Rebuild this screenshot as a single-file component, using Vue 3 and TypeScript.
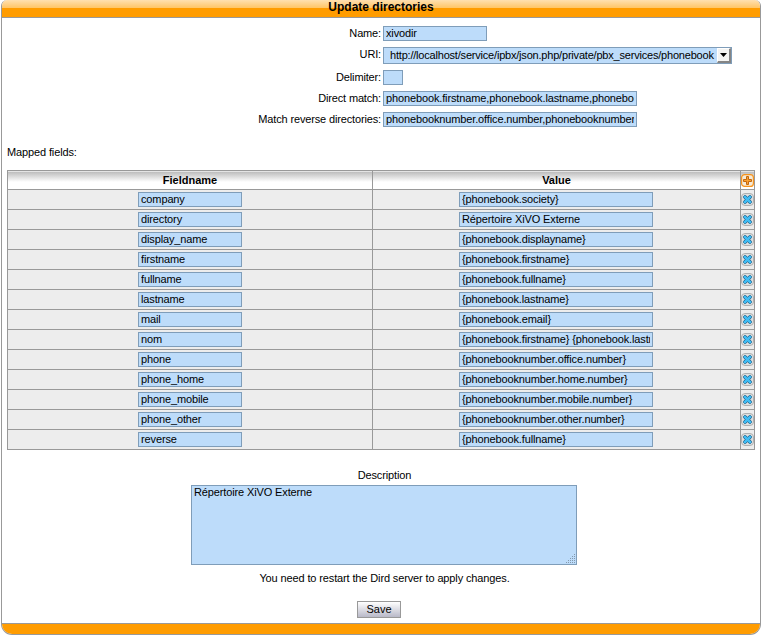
<script setup lang="ts">
import { ref } from 'vue'

interface MappedField {
  name: string
  value: string
}

const name = ref('xivodir')
const uri = ref('http://localhost/service/ipbx/json.php/private/pbx_services/phonebook')
const delimiter = ref('')
const directMatch = ref('phonebook.firstname,phonebook.lastname,phonebook.displayname')
const reverseMatch = ref('phonebooknumber.office.number,phonebooknumber.mobile.number')
const description = ref('Répertoire XiVO Externe')

const fields = ref<MappedField[]>([
  { name: 'company', value: '{phonebook.society}' },
  { name: 'directory', value: 'Répertoire XiVO Externe' },
  { name: 'display_name', value: '{phonebook.displayname}' },
  { name: 'firstname', value: '{phonebook.firstname}' },
  { name: 'fullname', value: '{phonebook.fullname}' },
  { name: 'lastname', value: '{phonebook.lastname}' },
  { name: 'mail', value: '{phonebook.email}' },
  { name: 'nom', value: '{phonebook.firstname} {phonebook.lastname}' },
  { name: 'phone', value: '{phonebooknumber.office.number}' },
  { name: 'phone_home', value: '{phonebooknumber.home.number}' },
  { name: 'phone_mobile', value: '{phonebooknumber.mobile.number}' },
  { name: 'phone_other', value: '{phonebooknumber.other.number}' },
  { name: 'reverse', value: '{phonebook.fullname}' },
])

function addField() {
  fields.value.push({ name: '', value: '' })
}

function removeField(index: number) {
  fields.value.splice(index, 1)
}
</script>

<template>
  <form class="panel" @submit.prevent>
    <h3 class="title">Update directories</h3>
    <div class="body">
      <div class="row"><label>Name:</label><input v-model="name" class="short" spellcheck="false" /></div>
      <div class="row uri">
        <label>URI:</label>
        <div class="select">
          <span>{{ uri }}</span>
          <i class="arrow"><svg width="7" height="4" viewBox="0 0 7 4"><path d="M0 0H7L3.5 4Z" fill="#000" /></svg></i>
        </div>
      </div>
      <div class="row"><label>Delimiter:</label><input v-model="delimiter" class="tiny" /></div>
      <div class="row"><label>Direct match:</label><input v-model="directMatch" class="long" spellcheck="false" /></div>
      <div class="row"><label>Match reverse directories:</label><input v-model="reverseMatch" class="long" spellcheck="false" /></div>

      <p class="mapped">Mapped fields:</p>
      <div class="table">
        <div class="line head">
          <div class="cell">Fieldname</div>
          <div class="cell">Value</div>
          <div class="cell icon" @click="addField">
            <svg width="13" height="13" viewBox="0 0 13 13">
              <rect x=".6" y=".6" width="11.8" height="11.8" rx="3" fill="#f5ead8" stroke="#f7941d" stroke-width="1.2" />
              <path d="M5.5 2.5H7.5V5.5H10.5V7.5H7.5V10.5H5.5V7.5H2.5V5.5H5.5Z" fill="#f9a030" stroke="#c4660c" />
            </svg>
          </div>
        </div>
        <div v-for="(field, i) in fields" :key="i" class="line">
          <div class="cell"><input v-model="field.name" class="short" spellcheck="false" /></div>
          <div class="cell val"><input v-model="field.value" class="value" spellcheck="false" /></div>
          <div class="cell icon" @click="removeField(i)">
            <svg width="13" height="13" viewBox="0 0 13 13">
              <rect x=".5" y=".5" width="12" height="12" rx="3.5" fill="#dedede" stroke="#b0b0b0" />
              <path d="M3.5 2.5H4.5L6.5 4.2L8.5 2.5H9.5L10.5 3.5V4.5L8.8 6.5L10.5 8.5V9.5L9.5 10.5H8.5L6.5 8.8L4.5 10.5H3.5L2.5 9.5V8.5L4.2 6.5L2.5 4.5V3.5Z" fill="#40bdf4" stroke="#266f98" />
            </svg>
          </div>
        </div>
      </div>

      <p class="desc">Description</p>
      <div class="area">
        <textarea v-model="description" spellcheck="false"></textarea>
        <svg class="grip" width="10" height="10" viewBox="0 0 10 10" shape-rendering="crispEdges">
          <path d="M8 0h1v1h-1zM6 2h1v1h-1zM8 2h1v1h-1zM4 4h1v1h-1zM6 4h1v1h-1zM8 4h1v1h-1zM2 6h1v1h-1zM4 6h1v1h-1zM6 6h1v1h-1zM8 6h1v1h-1zM0 8h1v1h-1zM2 8h1v1h-1zM4 8h1v1h-1zM6 8h1v1h-1zM8 8h1v1h-1z" fill="#8499ad" />
        </svg>
      </div>
      <p class="notice">You need to restart the Dird server to apply changes.</p>
      <button class="save" type="submit">Save</button>
    </div>
    <div class="foot"></div>
  </form>
</template>

<style>
body {
  margin: 0;
  background: #fff;
  overflow: hidden;
}
</style>

<style scoped>
* {
  box-sizing: border-box;
}
.panel {
  width: 760px;
  height: 635px;
  margin-left: 1px;
  border: 1px solid #999;
  border-top: 0;
  border-radius: 6px 6px 11px 11px;
  overflow: hidden;
  display: flex;
  flex-direction: column;
  font: 11px/13px "Liberation Sans", Arial, sans-serif;
  color: #000;
}
.title {
  height: 18px;
  margin: 0;
  flex: none;
  border-bottom: 1px solid #999;
  background: linear-gradient(#ffe0b0, #ffc566 8px, #ff9c00 8px);
  font-size: 12px;
  line-height: 14px;
  text-align: center;
}
.body {
  flex: 1;
  padding: 8px 5px 0;
  display: flex;
  flex-direction: column;
}
.row {
  display: grid;
  grid-template-columns: 374px auto;
  column-gap: 2px;
  justify-content: start;
  height: 15px;
  margin-bottom: 6px;
}
.row label {
  text-align: right;
  line-height: 15px;
  letter-spacing: -0.15px;
}
.row.uri {
  height: 17px;
}
input,
textarea,
.select {
  margin: 0;
  border: 1px solid #7f9db9;
  border-radius: 0;
  background: #bddcfa;
  font: inherit;
  letter-spacing: -0.13px;
  color: #000;
  outline: 0;
}
input {
  display: block;
  height: 15px;
  padding: 0 2px 1px;
  line-height: 12px;
}
.short {
  width: 104px;
}
.tiny {
  width: 20px;
}
.long {
  width: 254px;
}
.value {
  width: 194px;
}
.select {
  width: 349px;
  height: 17px;
  display: flex;
  justify-content: space-between;
  padding-left: 6px;
  line-height: 15px;
  letter-spacing: -0.2px;
  white-space: nowrap;
}
.arrow {
  flex: none;
  width: 14px;
  height: 15px;
  display: flex;
  align-items: center;
  justify-content: center;
  background: #f4f4f2;
  border: 1px solid;
  border-width: 1px 2px 2px 1px;
  border-color: #fff #858585 #858585 #fff;
}
p {
  margin: 0;
  letter-spacing: -0.13px;
}
.mapped {
  margin-top: 13px;
  height: 24px;
}
.table {
  width: 748px;
  border: 1px solid #999;
  border-bottom: 0;
}
.line {
  display: grid;
  grid-template-columns: 365px 368px 13px;
  height: 20px;
  border-bottom: 1px solid #999;
  background: #ededed;
}
.head {
  height: 19px;
  background: linear-gradient(#e4e4e4 0 1px, #bdbdbd 1px, #fff 11px);
  font-weight: bold;
}
.cell {
  display: flex;
  align-items: center;
  justify-content: center;
  border-right: 1px solid #999;
}
.cell.val {
  padding-right: 1px;
}
.cell.icon {
  border: 0;
}
.cell svg {
  display: block;
}
.desc {
  margin-top: 19px;
  padding-left: 7px;
  text-align: center;
}
.area {
  position: relative;
  width: 386px;
  height: 80px;
  margin: 3px 0 0 184px;
}
textarea {
  display: block;
  width: 100%;
  height: 100%;
  padding: 0 2px;
  resize: none;
}
.grip {
  position: absolute;
  right: 1px;
  bottom: 1px;
}
.notice {
  margin-top: 7px;
  padding-left: 7px;
  text-align: center;
}
.save {
  width: 44px;
  height: 17px;
  margin: 16px 0 0 350px;
  padding: 0;
  border: 1px solid #999;
  background: linear-gradient(#fff, #b9b9c8);
  font: inherit;
  color: #000;
}
.foot {
  flex: none;
  height: 11px;
  border-top: 1px solid #999;
  background: #ff9c00;
}
</style>
